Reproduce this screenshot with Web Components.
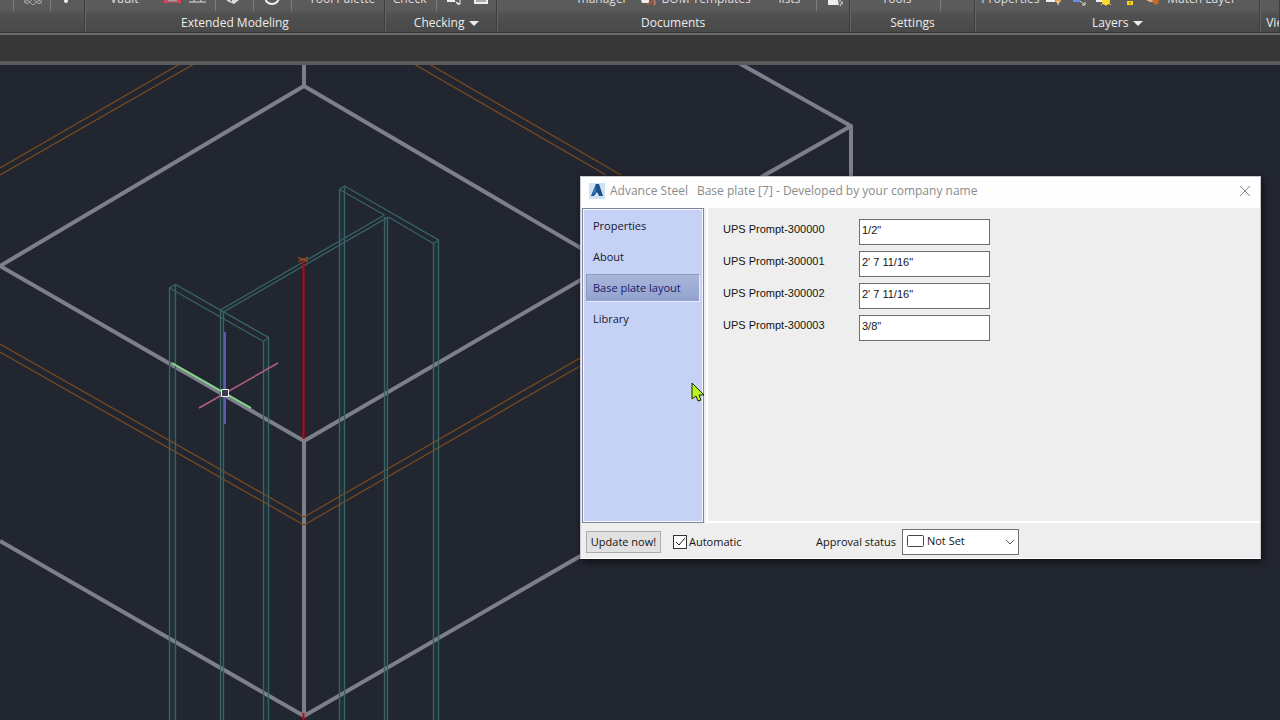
<!DOCTYPE html>
<html lang="en">
<head>
<meta charset="utf-8">
<title>Advance Steel</title>
<style>
  html, body { margin: 0; height: 100%; }
  body { font-family: "Open Sans", "Noto Sans", sans-serif; overflow: hidden; background: #222630; }
</style>
</head>
<body>
<steel-app>
  <tool-ribbon slot="ribbon">
    <ribbon-panel style="--grow:85;--pad:14px;--cols:11px 26px 14px 10px">
      <ribbon-divider></ribbon-divider>
      <ribbon-icon name="lattice"></ribbon-icon>
      <ribbon-divider></ribbon-divider>
      <ribbon-icon name="dot"></ribbon-icon>
    </ribbon-panel>
    <ribbon-panel label="Extended Modeling" style="--grow:301;--pad:25px;--cols:54px 25px 26px 12px 26px 12px 26px 18px 70px">
      <span>Vault</span>
      <ribbon-icon name="redbox"></ribbon-icon>
      <ribbon-icon name="rails"></ribbon-icon>
      <ribbon-divider></ribbon-divider>
      <ribbon-icon name="solid"></ribbon-icon>
      <ribbon-divider></ribbon-divider>
      <ribbon-icon name="ring"></ribbon-icon>
      <ribbon-divider></ribbon-divider>
      <span>Tool Palette</span>
    </ribbon-panel>
    <ribbon-panel label="Checking" menu style="--grow:111;--pad:8px;--title-pad:12px;--cols:43px 11px 27px 16px">
      <span>Check</span>
      <ribbon-divider></ribbon-divider>
      <ribbon-icon name="probe"></ribbon-icon>
      <ribbon-icon name="sheet"></ribbon-icon>
    </ribbon-panel>
    <ribbon-panel label="Documents" style="--grow:355;--pad:81px;--cols:63px 21px 117px 37px 12px 16px">
      <span>manager</span>
      <ribbon-icon name="bom"></ribbon-icon>
      <span>BOM Templates</span>
      <span>lists</span>
      <ribbon-divider></ribbon-divider>
      <ribbon-icon name="config"></ribbon-icon>
    </ribbon-panel>
    <ribbon-panel label="Settings" style="--grow:125;--pad:32px;--cols:58px 2px">
      <span>Tools</span>
      <ribbon-divider></ribbon-divider>
    </ribbon-panel>
    <ribbon-panel label="Layers" menu style="--grow:286;--pad:6px;--cols:65px 25px 25px 30px 20px 21px 70px">
      <span>Properties</span>
      <ribbon-icon name="pin"></ribbon-icon>
      <ribbon-icon name="arrow"></ribbon-icon>
      <ribbon-icon name="sun"></ribbon-icon>
      <ribbon-icon name="lock"></ribbon-icon>
      <ribbon-icon name="brush"></ribbon-icon>
      <span>Match Layer</span>
    </ribbon-panel>
    <ribbon-panel label="View" style="--grow:18;--pad:5px;--cols:1px;--title-pad:5px;--title-align:flex-start"></ribbon-panel>
  </tool-ribbon>

  <model-view slot="view">
    <joint-dialog></joint-dialog>
    <mouse-pointer></mouse-pointer>
  </model-view>
</steel-app>

<script>
const define = (name, html, setup) => customElements.define(name, class extends HTMLElement {
  connectedCallback() {
    if (this.shadowRoot) return;
    const root = this.attachShadow({ mode: 'open' });
    root.innerHTML = html;
    if (setup) setup(this, root);
  }
});

define('steel-app', `
  <style>
    :host { display: flex; flex-direction: column; height: 100vh; }
    .band { height: 26px; flex: none; background: #373737; border-bottom: 4px solid #5a5a5a; }
    .view { flex: 1; min-height: 0; display: flex; }
  </style>
  <slot name="ribbon"></slot>
  <div class="band"></div>
  <div class="view"><slot name="view"></slot></div>`);

define('tool-ribbon', `
  <style>
    :host { display: flex; flex: none; height: 32px; overflow: hidden;
            background: linear-gradient(#5c5c5c, #5a5a5a 11px, #505050 14px, #494949);
            border-bottom: 2px solid #6a6a6a; box-shadow: inset 0 -1px #333; padding-bottom: 1px; }
  </style>
  <slot></slot>`);

define('ribbon-panel', `
  <style>
    :host { display: flex; flex-direction: column; flex: var(--grow) 1 0; min-width: 0; box-sizing: border-box;
            border-left: 1px solid #646464; border-right: 1px solid #3e3e3e; overflow: hidden;
            font-size: 12px; line-height: 16px; color: #dedede; }
    :host(:first-child) { border-left: 0; }
    .tools { display: grid; grid-template-columns: var(--cols); grid-template-rows: 12px; align-items: end;
             height: 12px; padding-left: calc(var(--pad) - 1px); flex: none; white-space: nowrap; }
    ::slotted(span) { margin-bottom: 5px; }
    .title { display: flex; align-items: center; justify-content: var(--title-align, center); gap: 5px;
             height: 22px; flex: none; padding-left: var(--title-pad, 0); white-space: nowrap; color: #ececec; }
    .title i { border: 5px solid transparent; border-top-color: #ececec; border-bottom: 0; }
  </style>
  <div class="tools"><slot></slot></div>
  <div class="title"></div>`, (el, root) => {
    const title = root.querySelector('.title');
    if (el.hasAttribute('label')) title.append(Object.assign(document.createElement('span'), { textContent: el.getAttribute('label') }));
    if (el.hasAttribute('menu')) title.append(document.createElement('i'));
  });

define('ribbon-divider', `
  <style>:host { display: block; width: 1px; height: 11px; align-self: start; background: #7c7c7c; }</style>`);

const ribbonIcons = {
  lattice: '<path d="M0 0l3 4 6-5 6 5 3-4M0 3l3-3 6 5 6-5 3 4" fill="none" stroke="#aaa"/>',
  dot: '<circle cx="2" cy="1" r="2" fill="#eee"/>',
  redbox: '<path d="M2 1h13" stroke="#ddd"/><path d="M0 0h4v3H0zM13 0h4v3h-4z" fill="#d8405c"/><path d="M3 2h11" stroke="#d8405c"/>',
  rails: '<path d="M0 2h17M5 0v2M12 0v2" stroke="#ddd" stroke-width="1" fill="none"/>',
  solid: '<path d="M0 0h3l2 2V0h3l4 0-5 4-7-3z" fill="#ddd"/>',
  ring: '<circle cx="7" cy="-3" r="7" fill="none" stroke="#eee" stroke-width="2"/>',
  probe: '<path d="M0 0h8v2H0zM8 1l6 3-3 1-1-1z" fill="#eee"/><path d="M13 0v4" stroke="#eee"/>',
  sheet: '<path d="M0 0h14v4H0z" fill="#eee"/><path d="M2 1h10" stroke="#666"/>',
  bom: '<path d="M0 0h8v3H1z" fill="#eee"/><path d="M5 5l5-5 2 2-4 3z" fill="#a65a3c"/><path d="M13 0l1 3-1 2" stroke="#b8775c" stroke-width="2" fill="none"/>',
  config: '<path d="M0 0h10v5H0z" fill="#eee"/><circle cx="12" cy="3" r="2" fill="none" stroke="#ddd" stroke-width="2" stroke-dasharray="1 1"/>',
  pin: '<path d="M0 0h9v2H0z" fill="#eee"/><circle cx="12" cy="0" r="3" fill="#e8a25c"/><path d="M12 1v4" stroke="#eee"/>',
  arrow: '<path d="M2 0h7v2H2z" fill="#5f8fe0"/><path d="M9 1l5 4M14 2v3h-3" stroke="#ddd" fill="none"/>',
  sun: '<path d="M0 0h6v2H0z" fill="#eee"/><circle cx="10" cy="1" r="4" fill="#ffd92e"/><path d="M10 0v6M5 5l3-3M15 5l-3-3" stroke="#ffd92e"/>',
  lock: '<path d="M1 1h6v4H1z" fill="#ffd21a"/><path d="M3 3h2" stroke="#7a5a00"/>',
  brush: '<path d="M0 0h8v2H4z" fill="#ddb08a"/><path d="M6 0h7l-1 4-3 1z" fill="#c9682a"/>'
};
define('ribbon-icon', `
  <style>:host { display: block; height: 8px; margin-bottom: 4px; } svg { display: block; width: 18px; height: 8px; }</style>
  <svg viewBox="0 0 18 8" aria-hidden="true"></svg>`, (el, root) => {
    root.querySelector('svg').innerHTML = ribbonIcons[el.getAttribute('name')];
  });

define('model-view', `
  <style>
    :host { display: block; position: relative; flex: 1; overflow: hidden; background: #222630; }
    svg { display: block; width: 100%; height: 100%; }
    .slab { stroke: #7d7f8b; stroke-width: 4; stroke-linejoin: round; }
    .plate { stroke: #7b4b1d; stroke-width: 1.25; }
    .beam { stroke: #376266; stroke-width: 1.35; }
    .beam-fill { fill: #1d3a40; opacity: .5; }
  </style>
  <svg viewBox="0 65 1280 655" preserveAspectRatio="xMinYMin slice" fill="none" aria-hidden="true">
    <g class="beam-fill">
      <path d="M169 287h6v433h-6zM263 340h5v380h-5zM220 311h3v409h-3zM339 189h6v531h-6zM384 217h3v503h-3zM433 242h5v478h-5z"/>
    </g>
    <path class="slab" d="M304 60V86M304 86L0 266L304 441L608 264ZM304 441V716M0 541L304 716L608 540M737 62L851 126V200M851 126L742 188"/>
    <path class="plate" d="M0 168L180 64M0 175L194 64M414 64L606 175M429 64L621 175M0 344L304 517L608 342M0 352L304 525L608 350"/>
    <g class="beam">
      <path d="M169.500 720V288L175.500 284.500L268.500 337.500V720M169.500 288L263.500 341.500L268.500 337.500M175.500 720V284.500M263.500 720V341.500"/>
      <path d="M339.500 720V189.500L344.500 186L438.500 240V720M339.500 189.500L384.500 215M388.500 217L433.500 243.500L438.500 240M344.500 720V186M433.500 720V243.500"/>
      <path d="M220.500 720V310L384.500 215M223.500 720V312L387.500 217.500V720M384.500 217V720"/>
    </g>
    <path d="M303.500 260V439M303.500 713V720" stroke="#c40010" stroke-width="2"/>
    <path d="M298 257l10 5M308 257l-10 5M299 259h9" stroke="#a5501b"/>
    <path d="M225 332V424" stroke="#6058b0" stroke-width="2"/>
    <path d="M199 408L278 363" stroke="#b05f7c" stroke-width="1.5"/>
    <path d="M172 363L251 408" stroke="#84dc86" stroke-width="2"/>
    <path d="M221.500 389.500h7v7h-7z" stroke="#f4f4f4" fill="#3a3d4a"/>
  </svg>
  <slot></slot>`);

define('mouse-pointer', `
  <style>:host { display: block; position: absolute; left: 691px; top: 317px; } svg { display: block; }</style>
  <svg width="14" height="22" viewBox="0 0 14 22" aria-hidden="true">
    <path d="M1 1V17L5 14L7 19L10 18L8 13H13Z" fill="#b9f51c" stroke="#1c2408"/>
  </svg>`);

define('nav-item', `
  <style>
    :host { display: block; }
    button { display: block; width: 100%; height: 28px; padding: 0 6px; border: 1px solid transparent; background: none;
             font: inherit; text-align: left; color: #16182c; white-space: nowrap; }
    :host([selected]) button { background: linear-gradient(#a9b6da, #93a2cd); border-color: #8f9cc2 #e6ecff #e6ecff #8f9cc2; color: #15206e; }
  </style>
  <button type="button"><slot></slot></button>`);

define('prompt-field', `
  <style>
    :host { display: grid; grid-template-columns: 136px 131px; align-items: start; font: 11px/20px "Liberation Sans", Arial, sans-serif; color: #141414; }
    input { box-sizing: border-box; width: 100%; height: 26px; margin: 0; padding: 0 2px 4px; border: 1px solid #6e6e6e; border-radius: 0;
            background: #fff; font: inherit; color: #141414; outline: 0; }
  </style>
  <label for="value"></label><input id="value" type="text">`, (el, root) => {
    root.querySelector('label').textContent = el.getAttribute('label');
    root.querySelector('input').value = el.getAttribute('value');
  });

define('joint-dialog', `
  <style>
    :host { position: absolute; left: 580px; top: 111px; width: 681px; box-sizing: border-box; display: flex; flex-direction: column;
            background: #eee; border: 1px solid #c9cace; border-bottom-color: #fff; box-shadow: 2px 3px 8px rgba(0, 0, 0, .6);
            font-size: 11px; line-height: 16px; color: #141414; }
    header { box-sizing: border-box; display: flex; align-items: center; height: 31px; padding: 0 8px 4px; background: #fefefe; font-size: 12px; color: #8b8b8b; }
    header svg { flex: none; }
    h1 { flex: 1; display: flex; gap: 9px; margin: 0 0 0 5px; font: inherit; white-space: nowrap; }
    .close { display: flex; padding: 0; border: 0; background: none; }
    .body { display: grid; grid-template-columns: 123px 1fr; gap: 2px; height: 315px; }
    nav { box-sizing: border-box; display: flex; flex-direction: column; gap: 3px; margin-left: 1px; padding: 3px;
          background: #c6d2f5; border: 1px solid #82869c; box-shadow: inset 0 0 0 1px #f4f7ff; }
    main { display: flex; flex-direction: column; gap: 6px; padding: 11px 15px; border-left: 2px solid #fff; border-bottom: 2px solid #fff; }
    footer { box-sizing: border-box; display: flex; align-items: center; height: 35px; padding: 2px 0 0 5px; white-space: nowrap; }
    .update { box-sizing: border-box; width: 75px; height: 22px; padding: 0; border: 1px solid #adadad; background: #e1e1e1; font: inherit; color: inherit; }
    .auto { display: flex; align-items: center; gap: 2px; margin-left: 12px; width: 143px; }
    .auto input { appearance: none; box-sizing: border-box; width: 14px; height: 14px; margin: 0; border: 1px solid #333; background: #fff; }
    .tick { display: grid; }
    .tick > * { grid-area: 1 / 1; }
    .tick svg { position: relative; pointer-events: none; }
    .status { position: relative; display: flex; margin-left: 6px; }
    select { appearance: none; box-sizing: border-box; width: 117px; height: 26px; margin: 0; padding: 0 0 1px 24px; border: 1px solid #707070; border-radius: 0;
             background: #fff; font: inherit; color: inherit; }
    .status svg { position: absolute; inset: 0; pointer-events: none; }
  </style>
  <header>
    <svg width="16" height="16" viewBox="0 0 16 16" aria-hidden="true">
      <rect width="16" height="16" fill="#cfe2f3"/><path d="M2 13L7 1h3l4 12h-4l-2-3-3 3z" fill="#1d4e86"/><path d="M5 13l3-4 2 4z" fill="#cfe2f3"/><path d="M7 1L2 13l5-4z" fill="#3175b4"/>
    </svg>
    <h1><span>Advance Steel</span><span>Base plate [7] - Developed by your company name</span></h1>
    <button class="close" type="button" aria-label="Close">
      <svg width="14" height="14" viewBox="0 0 14 14"><path d="M2 2l10 10M12 2L2 12" stroke="#858585" fill="none"/></svg>
    </button>
  </header>
  <div class="body">
    <nav>
      <nav-item>Properties</nav-item>
      <nav-item>About</nav-item>
      <nav-item selected>Base plate layout</nav-item>
      <nav-item>Library</nav-item>
    </nav>
    <main>
      <prompt-field label="UPS Prompt-300000" value='1/2"'></prompt-field>
      <prompt-field label="UPS Prompt-300001" value="2' 7 11/16&quot;"></prompt-field>
      <prompt-field label="UPS Prompt-300002" value="2' 7 11/16&quot;"></prompt-field>
      <prompt-field label="UPS Prompt-300003" value='3/8"'></prompt-field>
    </main>
  </div>
  <footer>
    <button class="update" type="button">Update now!</button>
    <label class="auto">
      <span class="tick"><input type="checkbox" checked>
        <svg width="14" height="14" viewBox="0 0 14 14" aria-hidden="true"><path d="M3 7l3 3 6-7" stroke="#222" fill="none"/></svg></span>
      <span>Automatic</span>
    </label>
    <label for="approval">Approval status</label>
    <div class="status">
      <select id="approval"><option>Not Set</option></select>
      <svg width="117" height="26" viewBox="0 0 117 26" aria-hidden="true">
        <rect x="5.500" y="6.500" width="16" height="11" rx="1" fill="#fff" stroke="#444"/>
        <path d="M104 11l4 4 4-4" stroke="#555" fill="none"/>
      </svg>
    </div>
  </footer>`);
</script>
</body>
</html>
